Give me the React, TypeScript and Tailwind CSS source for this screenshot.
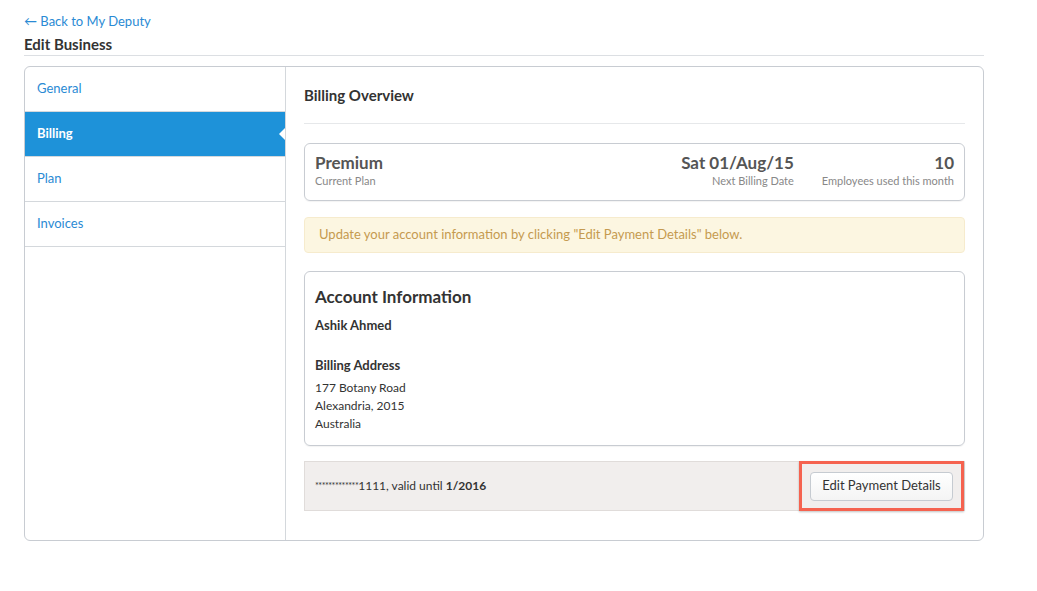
import React from "react";

export default function App() {
  const nav = ["General", "Billing", "Plan", "Invoices"];
  return (
    <div className="w-[1037px] h-[591px] bg-white text-[#333] pl-[24px] pt-[12px]" style={{ fontFamily: "Lato, 'Open Sans', sans-serif" }}>
      <div className="w-[960px]">
        <a className="block text-[13px] leading-[18px] text-[#2a8ad4]">← Back to My Deputy</a>
        <h1 className="mt-[5px] text-[15px] leading-[18px] font-bold text-[#333] pb-[2px] border-b border-[#dcdfe3]">Edit Business</h1>
        <div className="mt-[10px] h-[475px] flex border border-[#c8ccd2] rounded-[6px] overflow-hidden">
          <div className="w-[261px] border-r border-[#d4d8dc] flex flex-col">
            {nav.map((n) => {
              const active = n === "Billing";
              return (
                <div
                  key={n}
                  className={
                    active
                      ? "relative h-[45px] flex items-center pl-[12px] text-[13px] font-bold text-white bg-[#1e92d9] border-b border-[#d4d8dc]"
                      : "h-[45px] flex items-center pl-[12px] text-[13px] text-[#2a8ad4] border-b border-[#d4d8dc]"
                  }
                >
                  {n}
                  {active && (
                    <span className="absolute right-0 top-1/2 -translate-y-1/2 w-0 h-0 border-y-[6px] border-y-transparent border-r-[6px] border-r-white" />
                  )}
                </div>
              );
            })}
          </div>
          <div className="flex-1 px-[18px] pt-[18px]">
            <h2 className="text-[15px] leading-[20px] font-bold text-[#333] pb-[18px] border-b border-[#e6e8ea]">Billing Overview</h2>
            <div className="mt-[19px] h-[58px] border border-[#c8ccd2] rounded-[6px] flex items-center px-[10px] pb-[3px] shadow-[0_1px_1px_rgba(0,0,0,0.05)]">
              <div className="flex-1">
                <div className="text-[17px] leading-[20px] font-bold text-[#555]">Premium</div>
                <div className="text-[11px] leading-[15px] text-[#888]">Current Plan</div>
              </div>
              <div className="text-right">
                <div className="text-[17px] leading-[20px] font-bold text-[#555]">Sat 01/Aug/15</div>
                <div className="text-[11px] leading-[15px] text-[#888]">Next Billing Date</div>
              </div>
              <div className="text-right ml-[28px]">
                <div className="text-[17px] leading-[20px] font-bold text-[#555]">10</div>
                <div className="text-[11px] leading-[15px] text-[#888]">Employees used this month</div>
              </div>
            </div>
            <div className="mt-[16px] h-[36px] flex items-center px-[14px] bg-[#fcf6e1] border border-[#f6ebcd] rounded-[4px] text-[13px] text-[#c59a4f]">
              Update your account information by clicking "Edit Payment Details" below.
            </div>
            <div className="mt-[18px] h-[175px] border border-[#c8ccd2] rounded-[6px] px-[10px] pt-[14px] shadow-[0_1px_1px_rgba(0,0,0,0.05)]">
              <div className="text-[17px] leading-[22px] font-bold text-[#333]">Account Information</div>
              <div className="mt-[8px] text-[13px] leading-[18px] font-bold text-[#333]">Ashik Ahmed</div>
              <div className="mt-[22px] text-[13px] leading-[18px] font-bold text-[#333]">Billing Address</div>
              <div className="mt-[5px] text-[12px] leading-[18px] text-[#333]">
                <div>177 Botany Road</div>
                <div>Alexandria, 2015</div>
                <div>Australia</div>
              </div>
            </div>
            <div className="mt-[15px] h-[50px] flex items-center bg-[#f1eeed] border border-[#e0dcda]">
              <div className="flex-1 pl-[10px] text-[12px] text-[#333]">
                <span className="text-[9px] tracking-[-0.5px] align-[1px]">*************</span>1111, valid until <b>1/2016</b>
              </div>
              <div className="h-[50px] w-[165px] -my-px border-[3px] border-[#f5624f] flex items-center justify-center shadow-[0_1px_2px_rgba(0,0,0,0.25)]">
                <button className="h-[29px] px-[11px] rounded-[4px] border border-[#c6cbd1] bg-gradient-to-b from-white to-[#f4f4f4] text-[13px] text-[#333]">
                  Edit Payment Details
                </button>
              </div>
            </div>
          </div>
        </div>
      </div>
    </div>
  );
}
